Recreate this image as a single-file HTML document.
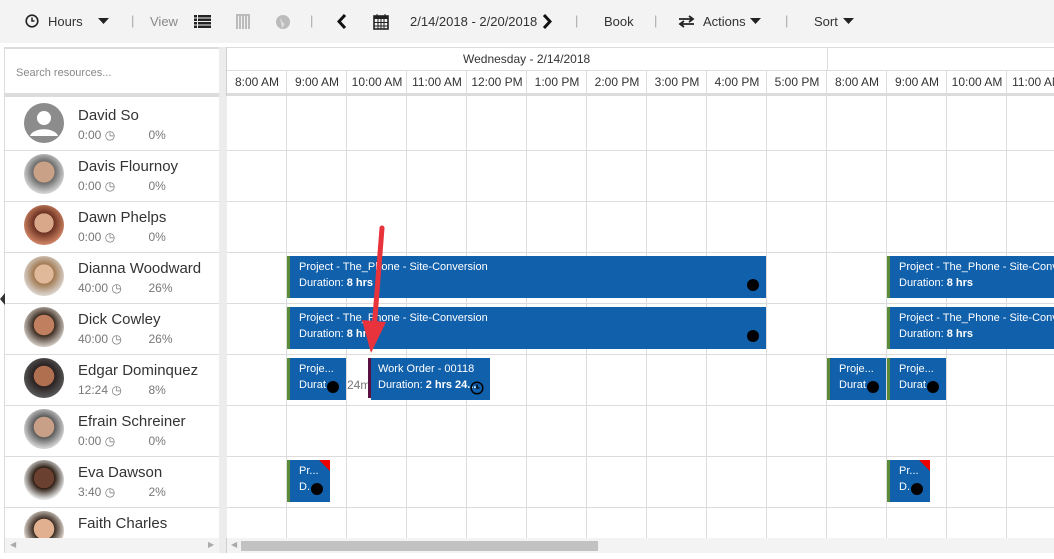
<!DOCTYPE html><html><head><style>
*{margin:0;padding:0;box-sizing:border-box}
body{width:1054px;height:559px;overflow:hidden;background:#fff;font-family:"Segoe UI","Liberation Sans",sans-serif;color:#333;position:relative}
.a{position:absolute}
.tb{left:0;top:0;width:1054px;height:43px;background:#f3f3f3}
.tt{font-size:13px;color:#333;top:14px}
.sep{color:#aaa;font-size:13px;top:13px}
.hl{background:#dcdcdc}
.hr{font-size:12px;color:#333;top:75px;width:60px;text-align:center}
.nm{font-size:15px;left:78px;color:#333}
.sb{font-size:12px;color:#777;left:78px}
.av{left:24px;width:40px;height:40px;border-radius:50%;overflow:hidden}
.bk{background:#1160ab;color:#fff;font-size:11px;line-height:16px;padding:3px 0 0 9px;border-left:3px solid #5a8a3a;overflow:hidden;white-space:nowrap}
.dot{width:12px;height:12px;border-radius:50%;background:#000}
</style></head><body>
<div class="a tb"></div>
<svg class="a" style="left:25px;top:14px" width="14" height="14" viewBox="0 0 14 14"><circle cx="7" cy="7" r="5.8" fill="none" stroke="#222" stroke-width="1.6"/><path d="M7 3.5V7H9.5" fill="none" stroke="#222" stroke-width="1.5"/></svg>
<div class="a tt" style="left:48px">Hours</div>
<svg class="a" style="left:98px;top:18px" width="11" height="7"><path d="M0 0H11L5.5 6Z" fill="#222"/></svg>
<div class="a sep" style="left:131px">|</div>
<div class="a tt" style="left:150px;color:#888">View</div>
<svg class="a" style="left:194px;top:15px" width="17" height="13"><g fill="#222"><rect x="0" y="0" width="3" height="2.5"/><rect x="4" y="0" width="13" height="2.5"/><rect x="0" y="3.5" width="3" height="2.5"/><rect x="4" y="3.5" width="13" height="2.5"/><rect x="0" y="7" width="3" height="2.5"/><rect x="4" y="7" width="13" height="2.5"/><rect x="0" y="10.5" width="3" height="2.5"/><rect x="4" y="10.5" width="13" height="2.5"/></g></svg>
<svg class="a" style="left:236px;top:14px" width="14" height="15"><g fill="#bbb"><rect x="0" y="0" width="14" height="2"/><rect x="0" y="2" width="2" height="13"/><rect x="3" y="2" width="2" height="13"/><rect x="6" y="2" width="2" height="13"/><rect x="9" y="2" width="2" height="13"/><rect x="12" y="2" width="2" height="13"/></g></svg>
<svg class="a" style="left:276px;top:15px" width="14" height="14"><circle cx="7" cy="7" r="7" fill="#bbb"/><path d="M4 3C6 4 5 7 8 8 9 10 7 12 6 13" fill="#ddd"/></svg>
<div class="a sep" style="left:310px">|</div>
<svg class="a" style="left:337px;top:14px" width="10" height="15"><path d="M8 1L2 7.5 8 14" fill="none" stroke="#111" stroke-width="3"/></svg>
<svg class="a" style="left:373px;top:13px" width="16" height="17"><rect x="1" y="3" width="14" height="13" fill="none" stroke="#222" stroke-width="1.6"/><rect x="1" y="3" width="14" height="3" fill="#222"/><path d="M4 1V5M12 1V5M1 9.5H15M1 13H15M5 6V16M8 6V16M11 6V16" stroke="#222" stroke-width="1"/></svg>
<div class="a tt" style="left:410px">2/14/2018 - 2/20/2018</div>
<svg class="a" style="left:542px;top:14px" width="10" height="15"><path d="M2 1L8 7.5 2 14" fill="none" stroke="#111" stroke-width="3"/></svg>
<div class="a sep" style="left:575px">|</div>
<div class="a tt" style="left:604px">Book</div>
<div class="a sep" style="left:654px">|</div>
<svg class="a" style="left:678px;top:15px" width="17" height="13"><path d="M1 4H15M11 1L15 4 11 7M16 9H2M6 6L2 9 6 12" fill="none" stroke="#222" stroke-width="1.8"/></svg>
<div class="a tt" style="left:703px">Actions</div>
<svg class="a" style="left:750px;top:18px" width="11" height="7"><path d="M0 0H11L5.5 6Z" fill="#222"/></svg>
<div class="a sep" style="left:785px">|</div>
<div class="a tt" style="left:814px">Sort</div>
<svg class="a" style="left:843px;top:18px" width="11" height="7"><path d="M0 0H11L5.5 6Z" fill="#222"/></svg>

<div class="a" style="left:4px;top:47px;width:216px;height:506px;border:1px solid #dcdcdc;border-top:2px solid #dcdcdc"></div>
<div class="a" style="left:5px;top:49px;width:214px;height:44px;background:#fff"></div>
<div class="a" style="left:16px;top:67px;font-size:11px;color:#888">Search resources...</div>
<div class="a hl" style="left:5px;top:93px;width:214px;height:4px"></div>
<div class="a hl" style="left:219px;top:47px;width:8px;height:506px;background:#ececec"></div>
<div class="a" style="left:226px;top:47px;width:1px;height:506px;background:#cfcfcf"></div>

<div class="a" style="left:227px;top:47px;width:827px;height:1px;background:#dcdcdc"></div>
<div class="a" style="left:463px;top:52px;font-size:12px">Wednesday - 2/14/2018</div>
<div class="a hl" style="left:227px;top:70px;width:827px;height:1px"></div>
<div class="a hl" style="left:827px;top:47px;width:1px;height:23px"></div>
<div class="a hl" style="left:227px;top:93px;width:827px;height:3px"></div>
<div class="a hr" style="left:227px">8:00 AM</div><div class="a hr" style="left:287px">9:00 AM</div><div class="a hr" style="left:347px">10:00 AM</div><div class="a hr" style="left:407px">11:00 AM</div><div class="a hr" style="left:467px">12:00 PM</div><div class="a hr" style="left:527px">1:00 PM</div><div class="a hr" style="left:587px">2:00 PM</div><div class="a hr" style="left:647px">3:00 PM</div><div class="a hr" style="left:707px">4:00 PM</div><div class="a hr" style="left:767px">5:00 PM</div><div class="a hr" style="left:827px">8:00 AM</div><div class="a hr" style="left:887px">9:00 AM</div><div class="a hr" style="left:947px">10:00 AM</div><div class="a hr" style="left:1007px">11:00 AM</div>
<div class="a hl" style="left:286px;top:70px;width:1px;height:468px"></div><div class="a hl" style="left:346px;top:70px;width:1px;height:468px"></div><div class="a hl" style="left:406px;top:70px;width:1px;height:468px"></div><div class="a hl" style="left:466px;top:70px;width:1px;height:468px"></div><div class="a hl" style="left:526px;top:70px;width:1px;height:468px"></div><div class="a hl" style="left:586px;top:70px;width:1px;height:468px"></div><div class="a hl" style="left:646px;top:70px;width:1px;height:468px"></div><div class="a hl" style="left:706px;top:70px;width:1px;height:468px"></div><div class="a hl" style="left:766px;top:70px;width:1px;height:468px"></div><div class="a hl" style="left:826px;top:70px;width:1px;height:468px"></div><div class="a hl" style="left:886px;top:70px;width:1px;height:468px"></div><div class="a hl" style="left:946px;top:70px;width:1px;height:468px"></div><div class="a hl" style="left:1006px;top:70px;width:1px;height:468px"></div>
<div class="a hl" style="left:5px;top:150px;width:1049px;height:1px"></div><div class="a hl" style="left:5px;top:201px;width:1049px;height:1px"></div><div class="a hl" style="left:5px;top:252px;width:1049px;height:1px"></div><div class="a hl" style="left:5px;top:303px;width:1049px;height:1px"></div><div class="a hl" style="left:5px;top:354px;width:1049px;height:1px"></div><div class="a hl" style="left:5px;top:405px;width:1049px;height:1px"></div><div class="a hl" style="left:5px;top:456px;width:1049px;height:1px"></div><div class="a hl" style="left:5px;top:507px;width:1049px;height:1px"></div>
<div class="a" style="left:219px;top:96px;width:8px;height:442px;background:#ececec"></div>

<div class="a av" style="top:103px;background:#8c8c8c"><svg width="40" height="40"><circle cx="20" cy="15" r="7" fill="#fff"/><path d="M6 33C9 24 31 24 34 33Z" fill="#fff"/></svg></div>
<div class="a nm" style="top:107px">David So</div><div class="a sb" style="top:128px">0:00 ◷ &nbsp; &nbsp; &nbsp; &nbsp; &nbsp;0%</div>
<div class="a av" style="top:154px;background:radial-gradient(circle at 50% 45%,#c9a186 0 35%,#6b6b6b 36%,#cfcfcf 70%)"></div>
<div class="a nm" style="top:158px">Davis Flournoy</div><div class="a sb" style="top:179px">0:00 ◷ &nbsp; &nbsp; &nbsp; &nbsp; &nbsp;0%</div>
<div class="a av" style="top:205px;background:radial-gradient(circle at 50% 45%,#d9a88a 0 32%,#6a3020 33%,#c98060 70%)"></div>
<div class="a nm" style="top:209px">Dawn Phelps</div><div class="a sb" style="top:230px">0:00 ◷ &nbsp; &nbsp; &nbsp; &nbsp; &nbsp;0%</div>
<div class="a av" style="top:256px;background:radial-gradient(circle at 50% 45%,#e0b89a 0 32%,#a07850 33%,#d8d0c8 70%)"></div>
<div class="a nm" style="top:260px">Dianna Woodward</div><div class="a sb" style="top:281px">40:00 ◷ &nbsp; &nbsp; &nbsp; &nbsp;26%</div>
<div class="a av" style="top:307px;background:radial-gradient(circle at 50% 45%,#c08060 0 34%,#3a2a20 35%,#c8c0b8 70%)"></div>
<div class="a nm" style="top:311px">Dick Cowley</div><div class="a sb" style="top:332px">40:00 ◷ &nbsp; &nbsp; &nbsp; &nbsp;26%</div>
<div class="a av" style="top:358px;background:radial-gradient(circle at 50% 45%,#b07050 0 34%,#2a2020 35%,#555 70%)"></div>
<div class="a nm" style="top:362px">Edgar Dominquez</div><div class="a sb" style="top:383px">12:24 ◷ &nbsp; &nbsp; &nbsp; &nbsp;8%</div>
<div class="a av" style="top:409px;background:radial-gradient(circle at 50% 45%,#c8a088 0 34%,#5a5a5a 35%,#d0d0d0 70%)"></div>
<div class="a nm" style="top:413px">Efrain Schreiner</div><div class="a sb" style="top:434px">0:00 ◷ &nbsp; &nbsp; &nbsp; &nbsp; &nbsp;0%</div>
<div class="a av" style="top:460px;background:radial-gradient(circle at 50% 45%,#6a4030 0 34%,#2a1a10 35%,#e0e0e0 70%)"></div>
<div class="a nm" style="top:464px">Eva Dawson</div><div class="a sb" style="top:485px">3:40 ◷ &nbsp; &nbsp; &nbsp; &nbsp; &nbsp;2%</div>
<div class="a av" style="top:511px;background:radial-gradient(circle at 50% 45%,#e0b090 0 34%,#3a2a20 35%,#e0d8d0 70%)"></div>
<div class="a nm" style="top:515px">Faith Charles</div>

<div class="a bk" style="left:287px;top:256px;width:479px;height:42px">Project - The_Phone - Site-Conversion<br>Duration: <b>8 hrs</b></div>
<div class="a dot" style="left:747px;top:279px"></div>
<div class="a bk" style="left:887px;top:256px;width:167px;height:42px">Project - The_Phone - Site-Conversion<br>Duration: <b>8 hrs</b></div>
<div class="a bk" style="left:287px;top:307px;width:479px;height:42px">Project - The_Phone - Site-Conversion<br>Duration: <b>8 hrs</b></div>
<div class="a dot" style="left:747px;top:330px"></div>
<div class="a bk" style="left:887px;top:307px;width:167px;height:42px">Project - The_Phone - Site-Conversion<br>Duration: <b>8 hrs</b></div>
<div class="a bk" style="left:287px;top:358px;width:59px;height:42px">Proje...<br>Durat...</div>
<div class="a dot" style="left:327px;top:381px"></div>
<div class="a" style="left:347px;top:358px;width:22px;height:40px;background:#fff;font-size:12px;color:#777;padding-top:20px;overflow:hidden">24m</div>
<div class="a" style="left:368px;top:358px;width:3px;height:40px;background:#5a1040"></div>
<div class="a bk" style="left:371px;top:358px;width:119px;height:42px;border-left:0;padding-left:7px">Work Order - 00118<br>Duration: <b>2 hrs 24...</b></div>
<svg class="a" style="left:470px;top:381px" width="14" height="14"><circle cx="7" cy="7" r="5.8" fill="none" stroke="#000" stroke-width="1.5"/><path d="M7 3.5V7H9.5" fill="none" stroke="#000" stroke-width="1.3"/></svg>
<div class="a bk" style="left:827px;top:358px;width:59px;height:42px">Proje...<br>Durat...</div>
<div class="a dot" style="left:867px;top:381px"></div>
<div class="a bk" style="left:887px;top:358px;width:59px;height:42px">Proje...<br>Durat...</div>
<div class="a dot" style="left:927px;top:381px"></div>
<div class="a bk" style="left:287px;top:460px;width:43px;height:42px">Pr...<br>D...</div>
<svg class="a" style="left:319px;top:460px" width="11" height="11"><path d="M0 0H11V11Z" fill="#e00"/></svg>
<div class="a dot" style="left:311px;top:483px"></div>
<div class="a bk" style="left:887px;top:460px;width:43px;height:42px">Pr...<br>D...</div>
<svg class="a" style="left:919px;top:460px" width="11" height="11"><path d="M0 0H11V11Z" fill="#e00"/></svg>
<div class="a dot" style="left:911px;top:483px"></div>

<svg class="a" style="left:350px;top:220px" width="50" height="140"><path d="M32 8L24 110" stroke="#e8323c" stroke-width="5" stroke-linecap="round"/><path d="M12 100L21 133 36 102Z" fill="#e8323c"/></svg>

<div class="a" style="left:5px;top:538px;width:214px;height:15px;background:#f3f3f3"></div>
<div class="a" style="left:10px;top:540px;font-size:8px;color:#aaa">◀</div>
<div class="a" style="left:208px;top:540px;font-size:8px;color:#aaa">▶</div>
<div class="a" style="left:227px;top:538px;width:827px;height:15px;background:#f3f3f3"></div>
<div class="a" style="left:231px;top:540px;font-size:8px;color:#aaa">◀</div>
<div class="a" style="left:241px;top:541px;width:357px;height:10px;background:#c2c2c2"></div>
<svg class="a" style="left:0;top:293px" width="5" height="12"><path d="M5 0V12L0 6Z" fill="#333"/></svg>
</body></html>
